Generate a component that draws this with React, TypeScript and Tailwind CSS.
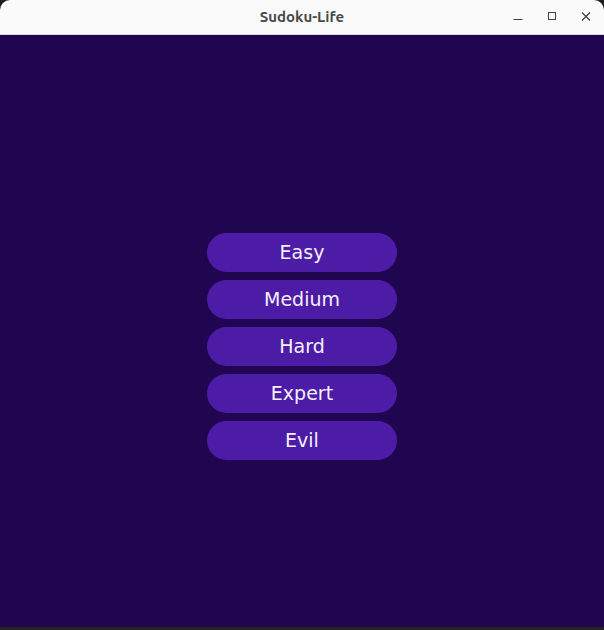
import React from "react";

export default function App() {
  const levels = ["Easy", "Medium", "Hard", "Expert", "Evil"];
  return (
    <div className="w-[604px] h-[630px] bg-[#1e1e1e] flex flex-col overflow-hidden" style={{ fontFamily: "'DejaVu Sans', sans-serif" }}>
      <div className="h-[35px] shrink-0 bg-[#fafafa] rounded-t-[10px] border-b border-[#d8d8d8] relative flex items-center justify-center">
        <span className="text-[15px] font-bold text-[#4a4a4a]" style={{ fontFamily: "'Ubuntu', 'DejaVu Sans', sans-serif" }}>Sudoku-Life</span>
        <div className="absolute right-0 top-0 h-full flex items-center">
          <div className="w-[34px] flex justify-center">
            <svg width="10" height="10" viewBox="0 0 10 10"><path d="M0.5 7.5H9.5" stroke="#3d3d3d" strokeWidth="1" /></svg>
          </div>
          <div className="w-[34px] flex justify-center">
            <svg width="10" height="10" viewBox="0 0 10 10"><rect x="1.5" y="0.5" width="7" height="7" fill="none" stroke="#3d3d3d" strokeWidth="1" /></svg>
          </div>
          <div className="w-[34px] flex justify-center mr-[1px]">
            <svg width="10" height="10" viewBox="0 0 10 10"><path d="M1 0.5L9 8.5M9 0.5L1 8.5" stroke="#3d3d3d" strokeWidth="1.2" /></svg>
          </div>
        </div>
      </div>
      <div className="flex-1 bg-[#200550] flex flex-col items-center pt-[198px] gap-[8px]">
        {levels.map((l) => (
          <button key={l} className="w-[190px] h-[39px] rounded-full bg-[#4d1ca6] text-[#f4f0fa] text-[19px] flex items-center justify-center">
            {l}
          </button>
        ))}
      </div>
      <div className="h-[3px] shrink-0 bg-[#222222]" />
    </div>
  );
}
